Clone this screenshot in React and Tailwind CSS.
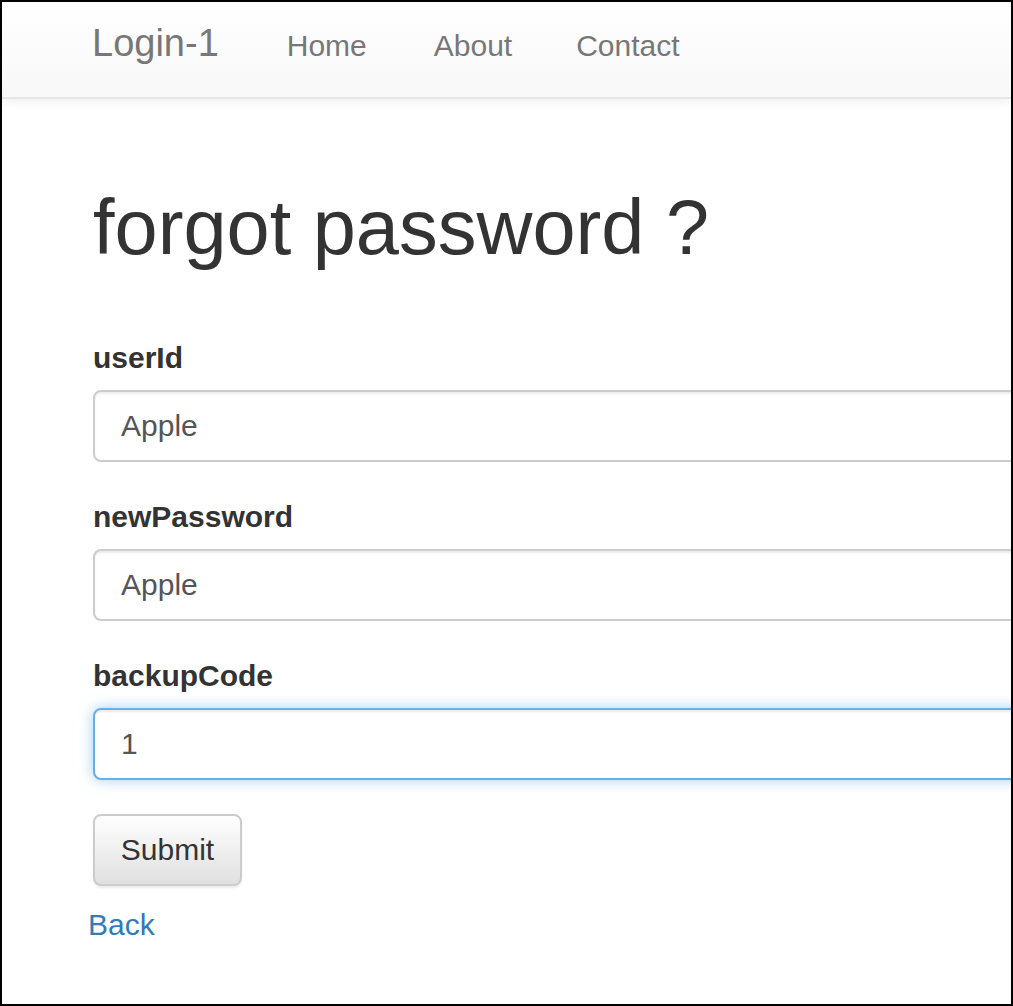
import React from 'react';

const fieldClass =
  'block w-[1000px] h-[72px] px-[26px] border-2 rounded-[8px] bg-white text-[30px] text-[#555] outline-none';

const Field = ({ label, value, focused, last }) => (
  <div className={last ? '' : 'mb-[40px]'}>
    <label className="block text-[30px] leading-none font-bold text-[#333] mb-[17px]">{label}</label>
    <input
      type="text"
      defaultValue={value}
      className={`${fieldClass} ${
        focused
          ? 'border-[#66afe9] shadow-[inset_0_2px_2px_rgba(0,0,0,0.075),0_0_14px_rgba(102,175,233,0.6)]'
          : 'border-[#cccccc] shadow-[inset_0_2px_2px_rgba(0,0,0,0.075)]'
      }`}
    />
  </div>
);

export default function App() {
  return (
    <div className="w-[1013px] h-[1006px] border-2 border-black overflow-hidden bg-white font-['Liberation_Sans',Arial,sans-serif]">
      {/* navbar */}
      <nav className="h-[97px] border-b-2 border-[#e7e7e7] bg-linear-to-b from-white to-[#f8f8f8] shadow-[0_2px_10px_rgba(0,0,0,0.075)] flex items-start pl-[90px] pt-[22px]">
        <a href="#" className="text-[38px] leading-none text-[#777]">Login-1</a>
        <div className="flex ml-[68px] mt-[7px] text-[30px] leading-none text-[#777]">
          <a href="#">Home</a>
          <a href="#" className="ml-[67px]">About</a>
          <a href="#" className="ml-[64px]">Contact</a>
        </div>
      </nav>

      <main className="pl-[91px]">
        <h1 className="mt-[90px] text-[77.5px] leading-none font-normal text-[#333]">forgot password ?</h1>

        <form className="mt-[76px]" onSubmit={(e) => e.preventDefault()}>
          <Field label="userId" value="Apple" />
          <Field label="newPassword" value="Apple" />
          <Field label="backupCode" value="1" focused last />

          <button
            type="submit"
            className="block mt-[34px] w-[149px] h-[72px] border-2 border-[#cccccc] rounded-[8px] bg-linear-to-b from-white to-[#e0e0e0] text-[30px] text-[#333] shadow-[inset_0_2px_0_rgba(255,255,255,0.15),0_2px_2px_rgba(0,0,0,0.075)]"
          >
            Submit
          </button>
        </form>

        <a href="#" className="block w-fit mt-[24px] -ml-[5px] text-[30px] leading-none text-[#337ab7]">Back</a>
      </main>
    </div>
  );
}
